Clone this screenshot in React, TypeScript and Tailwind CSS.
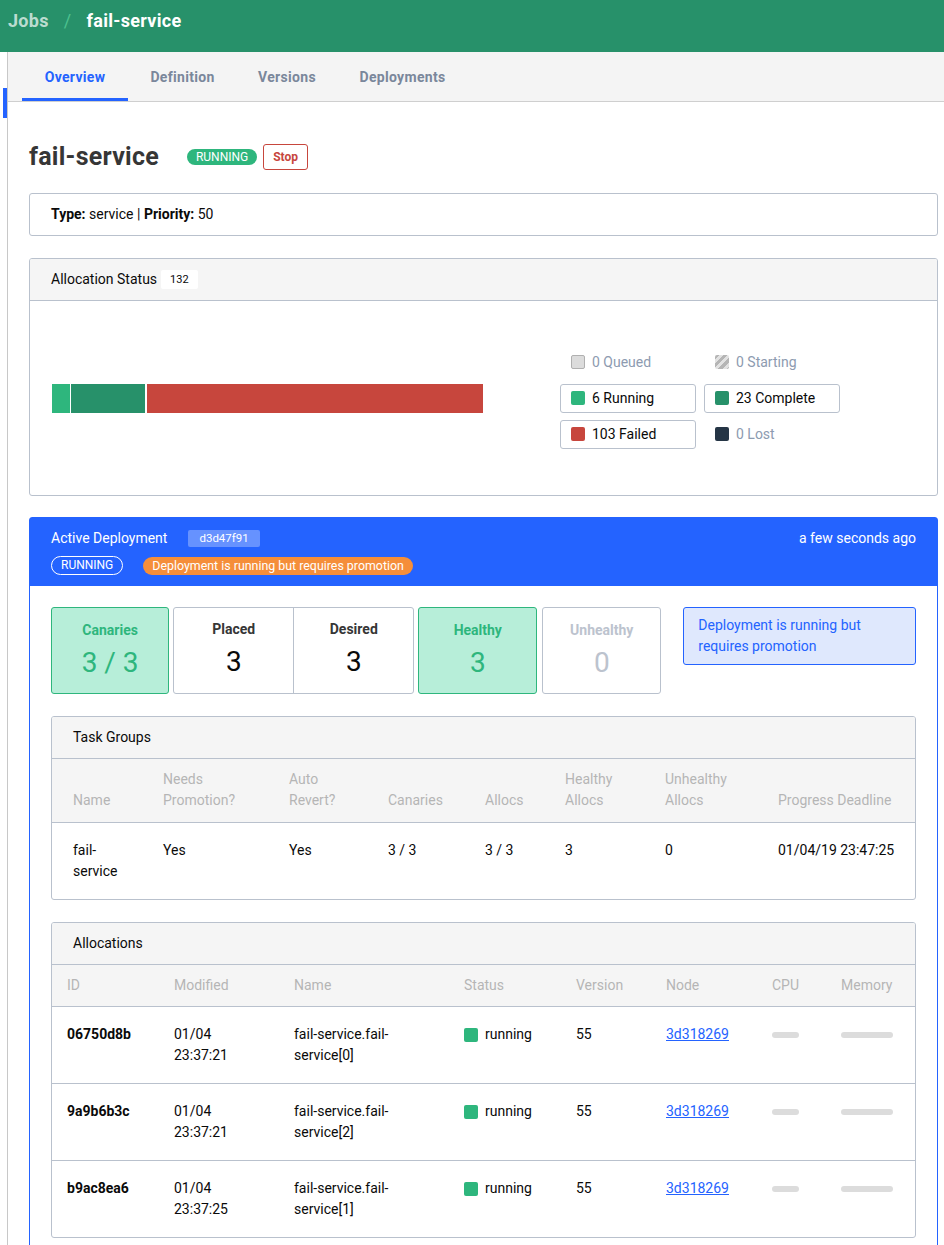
import React from 'react';

const border = 'border-[#b9c1cd]';

function LegendItem({
  swatch,
  label,
  boxed,
}: {
  swatch: string;
  label: string;
  boxed?: boolean;
}) {
  return (
    <div
      className={`flex h-[29px] w-[136px] items-center rounded-[3px] border px-[10px] ${
        boxed ? border : 'border-transparent'
      }`}
    >
      <span className={`h-[14px] w-[14px] shrink-0 rounded-[2px] ${swatch}`} />
      <span className={`ml-[7px] ${boxed ? 'text-[#0a0a0a]' : 'text-[#8d9bb0]'}`}>{label}</span>
    </div>
  );
}

function Stat({
  label,
  value,
  tone,
}: {
  label: string;
  value: string;
  tone: 'green' | 'plain' | 'muted';
}) {
  const box =
    tone === 'green'
      ? 'h-[87px] border border-[#2eb67d] bg-[#b7eed9] rounded-[3px] pt-[12px]'
      : tone === 'muted'
      ? `h-[87px] border ${border} rounded-[3px] pt-[12px]`
      : 'h-[85px] pt-[11px]';
  const labelColor =
    tone === 'green' ? 'text-[#2eb67d]' : tone === 'muted' ? 'text-[#bcc3ce]' : 'text-[#363636]';
  const valueColor =
    tone === 'green' ? 'text-[#2eb67d]' : tone === 'muted' ? 'text-[#bcc3ce]' : 'text-[#0a0a0a]';
  return (
    <div className={`flex w-[119px] flex-col items-center ${box}`}>
      <div className={`font-bold ${labelColor}`}>{label}</div>
      <div className={`text-[28px] leading-[44px] ${valueColor}`}>{value}</div>
    </div>
  );
}

const taskCols = 'grid grid-cols-[90px_126px_99px_97px_80px_100px_113px_1fr] pl-[21px]';
const allocCols = 'grid grid-cols-[107px_120px_170px_112px_90px_106px_69px_1fr] pl-[15px]';

const tabs = [
  { name: 'Overview', w: 'w-[106px]' },
  { name: 'Definition', w: 'w-[109px]' },
  { name: 'Versions', w: 'w-[100px]' },
  { name: 'Deployments', w: 'w-[131px]' },
];

const allocs = [
  { id: '06750d8b', time: '23:37:21', idx: 0 },
  { id: '9a9b6b3c', time: '23:37:21', idx: 2 },
  { id: 'b9ac8ea6', time: '23:37:25', idx: 1 },
];

export default function App() {
  return (
    <div className="min-h-screen bg-white font-['Roboto',sans-serif] text-[14px] leading-[21px] text-[#0a0a0a]">
      {/* Top bar */}
      <header className="flex h-[52px] items-start bg-[#27916a] px-2 pt-[8px] text-[18px] font-bold leading-[26px] tracking-[0.3px]">
        <span className="text-white/70">Jobs</span>
        <span className="mx-[15px] font-normal text-[#4cc18f]">/</span>
        <span className="text-white">fail-service</span>
      </header>

      <div className="flex">
        <aside className="min-h-[1400px] w-2 shrink-0 border-r border-[#c8c8c8]">
          <div className="ml-[3px] mt-[36px] h-[30px] w-[4px] bg-[#2463ff]" />
        </aside>

        <main className="min-w-0 flex-1">
          {/* Tabs */}
          <nav className="flex h-[50px] border-b border-[#cfcfcf] bg-[#f4f4f4] pl-[14px]">
            {tabs.map((t, i) => (
              <div
                key={t.name}
                className={`flex h-full items-center justify-center border-b-[3px] pt-[4px] font-bold tracking-[0.3px] ${t.w} ${
                  i === 0 ? 'border-[#2463ff] text-[#2463ff]' : 'border-transparent text-[#7a879b]'
                }`}
              >
                {t.name}
              </div>
            ))}
          </nav>

          <div className="pl-[21px] pr-[6px] pt-[40px]">
            {/* Title */}
            <div className="flex h-[30px] items-center">
              <h1 className="text-[25px] font-bold leading-[30px] tracking-[0.25px] text-[#363636]">
                fail-service
              </h1>
              <span className="ml-[28px] h-[16px] rounded-full bg-[#2eb67d] px-[9px] text-[12px] leading-[16px] text-white">
                RUNNING
              </span>
              <button className="ml-[6px] h-[26px] rounded-[3px] border border-[#c7463d] px-[9px] text-[12px] font-bold text-[#c7463d]">
                Stop
              </button>
            </div>

            {/* Meta */}
            <div className={`mt-[21px] rounded-[3px] border ${border} px-[21px] py-[10px]`}>
              <b>Type:</b> service | <b>Priority:</b> 50
            </div>

            {/* Allocation status */}
            <div className={`mt-[22px] overflow-hidden rounded-[3px] border ${border}`}>
              <div className={`flex h-[42px] items-center border-b ${border} bg-[#f5f5f5] px-[21px]`}>
                Allocation Status
                <span className="ml-[4px] h-[19px] rounded-[2px] bg-white px-[9px] text-[11px] leading-[19px]">
                  132
                </span>
              </div>
              <div className="flex h-[194px] items-center pl-[22px]">
                <div className="flex h-[29px] w-[431px]">
                  <div className="w-[18px] bg-[#2eb67d]" />
                  <div className="ml-[1px] w-[74px] bg-[#27916a]" />
                  <div className="ml-[2px] flex-1 bg-[#c7463d]" />
                </div>
                <div className="ml-[77px] grid grid-cols-[136px_136px] gap-x-2 gap-y-[7px]">
                  <LegendItem swatch="bg-[#dcdcdc] border border-[#b0b0b0]" label="0 Queued" />
                  <LegendItem
                    swatch="bg-[repeating-linear-gradient(135deg,#b5b5b5_0px,#b5b5b5_3px,#e2e2e2_3px,#e2e2e2_6px)]"
                    label="0 Starting"
                  />
                  <LegendItem swatch="bg-[#2eb67d]" label="6 Running" boxed />
                  <LegendItem swatch="bg-[#27916a]" label="23 Complete" boxed />
                  <LegendItem swatch="bg-[#c7463d]" label="103 Failed" boxed />
                  <LegendItem swatch="bg-[#253545]" label="0 Lost" />
                </div>
              </div>
            </div>

            {/* Active deployment */}
            <div className="mt-[21px] rounded-t-[3px] border border-[#2463ff]">
              <div className="bg-[#2463ff] px-[21px] pb-[11px] pt-[10px] text-white">
                <div className="flex items-center justify-between">
                  <div className="flex items-center">
                    Active Deployment
                    <span className="ml-[21px] h-[17px] rounded-[2px] bg-white/30 px-[11px] text-[11.5px] leading-[17px]">
                      d3d47f91
                    </span>
                  </div>
                  <span>a few seconds ago</span>
                </div>
                <div className="mt-[7px] flex items-center">
                  <span className="h-[19px] rounded-full border border-white px-[9px] text-[12px] leading-[17px]">
                    RUNNING
                  </span>
                  <span className="ml-[20px] h-[18px] rounded-full bg-[#f58e3a] px-[9px] text-[12.4px] leading-[18px]">
                    Deployment is running but requires promotion
                  </span>
                </div>
              </div>

              <div className="px-[21px] pb-[22px] pt-[21px]">
                {/* Stats */}
                <div className="flex items-start">
                  <Stat label="Canaries" value="3 / 3" tone="green" />
                  <div className={`ml-1 flex rounded-[3px] border ${border}`}>
                    <Stat label="Placed" value="3" tone="plain" />
                    <div className={`border-l ${border}`}>
                      <Stat label="Desired" value="3" tone="plain" />
                    </div>
                  </div>
                  <div className="ml-1">
                    <Stat label="Healthy" value="3" tone="green" />
                  </div>
                  <div className="ml-[5px]">
                    <Stat label="Unhealthy" value="0" tone="muted" />
                  </div>
                  <div className="ml-[22px] w-[234px] rounded-[3px] border border-[#2463ff] bg-[#dfe8fd] px-[14px] py-[7px] text-[#2463ff]">
                    Deployment is running but requires promotion
                  </div>
                </div>

                {/* Task groups */}
                <div className={`mt-[22px] overflow-hidden rounded-[3px] border ${border}`}>
                  <div className={`flex h-[42px] items-center border-b ${border} bg-[#f5f5f5] px-[21px]`}>
                    Task Groups
                  </div>
                  <div className={`${taskCols} items-end border-b ${border} bg-[#f5f5f5] pb-[11px] pt-[10px] text-[#b5b5b5]`}>
                    <div>Name</div>
                    <div>
                      Needs
                      <br />
                      Promotion?
                    </div>
                    <div>
                      Auto
                      <br />
                      Revert?
                    </div>
                    <div>Canaries</div>
                    <div>Allocs</div>
                    <div>
                      Healthy
                      <br />
                      Allocs
                    </div>
                    <div>
                      Unhealthy
                      <br />
                      Allocs
                    </div>
                    <div>Progress Deadline</div>
                  </div>
                  <div className={`${taskCols} pb-[17px] pt-[17px]`}>
                    <div>
                      fail-
                      <br />
                      service
                    </div>
                    <div>Yes</div>
                    <div>Yes</div>
                    <div>3 / 3</div>
                    <div>3 / 3</div>
                    <div>3</div>
                    <div>0</div>
                    <div>01/04/19 23:47:25</div>
                  </div>
                </div>

                {/* Allocations */}
                <div className={`mt-[22px] overflow-hidden rounded-[3px] border ${border}`}>
                  <div className={`flex h-[42px] items-center border-b ${border} bg-[#f5f5f5] px-[21px]`}>
                    Allocations
                  </div>
                  <div className={`${allocCols} border-b ${border} bg-[#f5f5f5] py-[10px] text-[#b5b5b5]`}>
                    <div>ID</div>
                    <div>Modified</div>
                    <div>Name</div>
                    <div>Status</div>
                    <div>Version</div>
                    <div>Node</div>
                    <div>CPU</div>
                    <div>Memory</div>
                  </div>
                  {allocs.map((a, i) => (
                    <div
                      key={a.id}
                      className={`${allocCols} pb-[17px] pt-[17px] ${
                        i < allocs.length - 1 ? `border-b ${border}` : ''
                      }`}
                    >
                      <div className="font-bold">{a.id}</div>
                      <div>
                        01/04
                        <br />
                        {a.time}
                      </div>
                      <div>
                        fail-service.fail-
                        <br />
                        service[{a.idx}]
                      </div>
                      <div className="flex h-[21px] items-center">
                        <span className="h-[14px] w-[14px] rounded-[2px] bg-[#2eb67d]" />
                        <span className="ml-[7px]">running</span>
                      </div>
                      <div>55</div>
                      <div>
                        <a href="#" className="text-[#2463ff] underline">
                          3d318269
                        </a>
                      </div>
                      <div className="flex h-[21px] items-center">
                        <span className="h-[6px] w-[27px] rounded-full bg-[#dcdcdc]" />
                      </div>
                      <div className="flex h-[21px] items-center">
                        <span className="h-[6px] w-[52px] rounded-full bg-[#dcdcdc]" />
                      </div>
                    </div>
                  ))}
                </div>
              </div>
            </div>
          </div>
        </main>
      </div>
    </div>
  );
}
